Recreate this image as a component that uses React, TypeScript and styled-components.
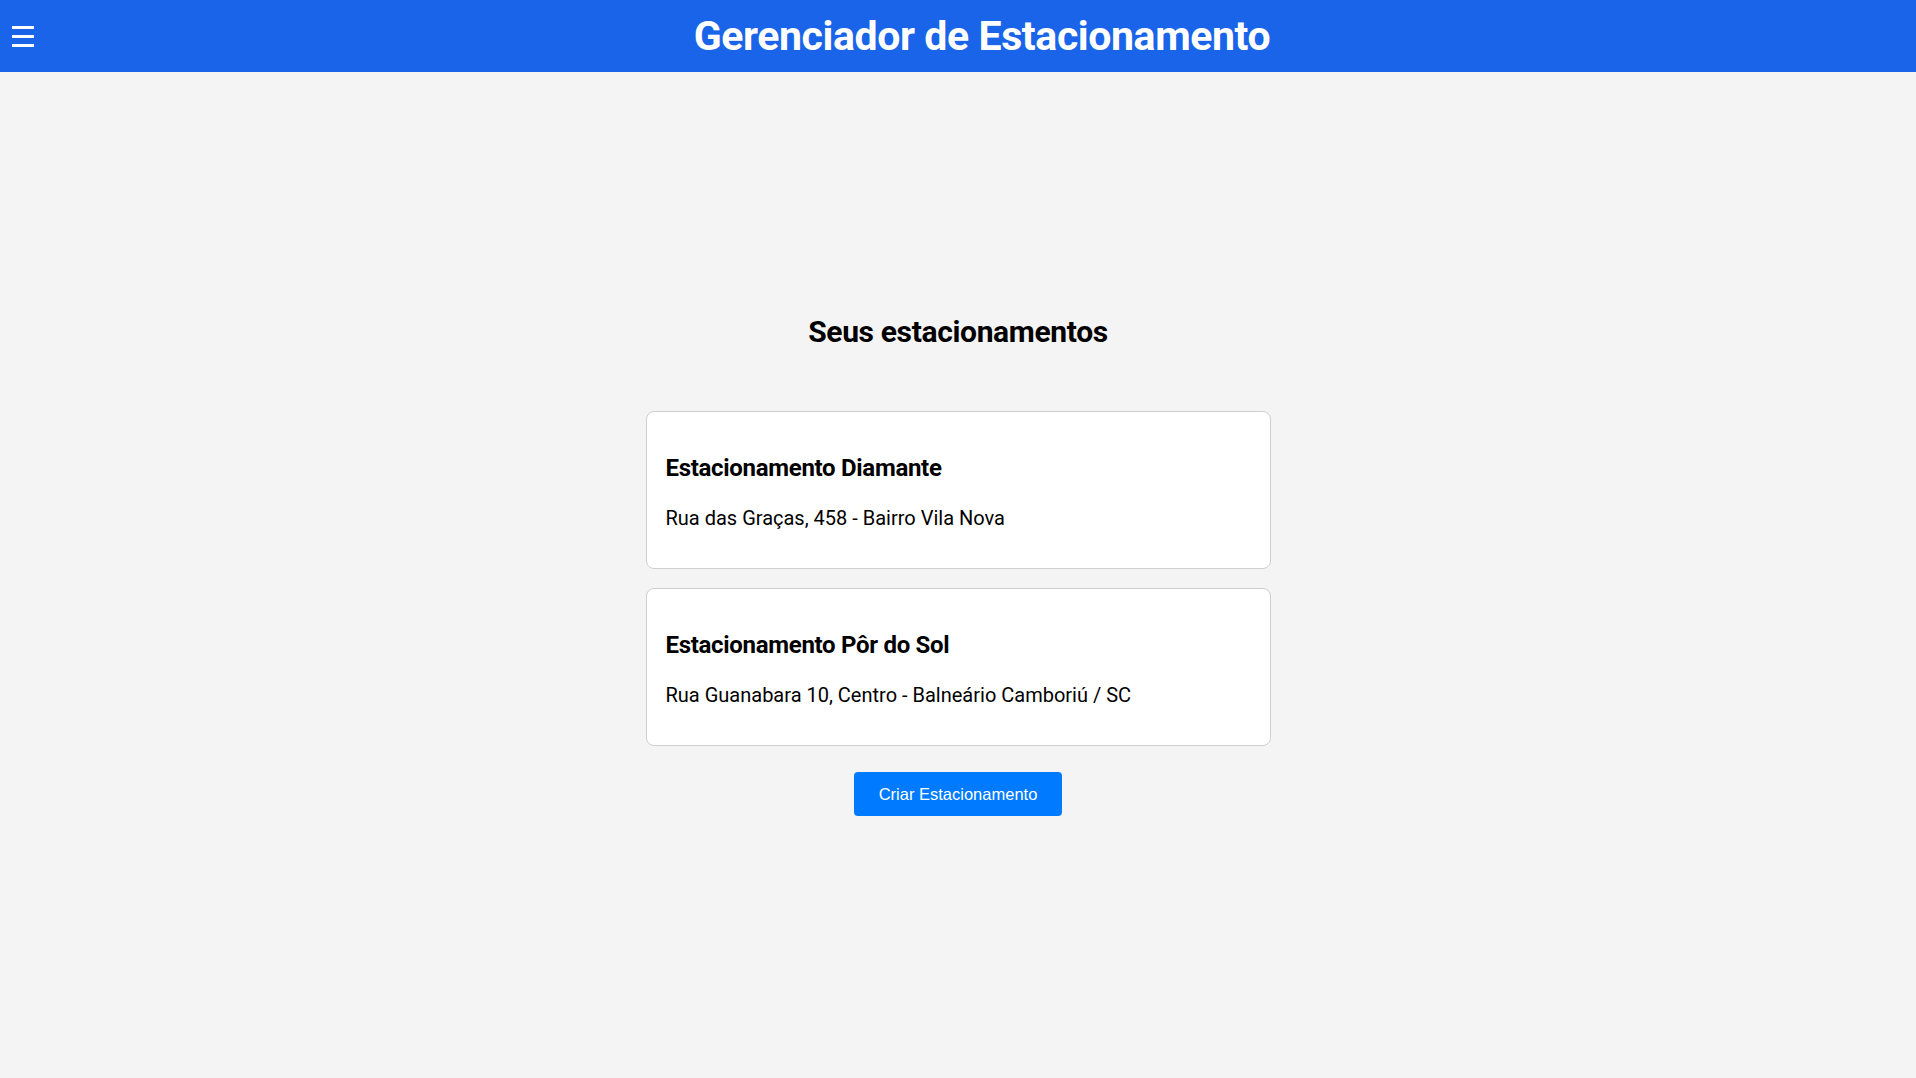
import React from "react";
import styled, { createGlobalStyle } from "styled-components";

const GlobalStyle = createGlobalStyle`
  html, body {
    margin: 0;
    padding: 0;
    background: #f4f4f4;
    font-family: Roboto, "Noto Sans", Arial, sans-serif;
    color: #000;
  }
  * { box-sizing: border-box; }
`;

const Header = styled.header`
  height: 72px;
  background: #1a64e9;
  display: flex;
  align-items: center;
`;

const MenuButton = styled.button`
  width: 48px;
  height: 72px;
  padding: 0 0 0 12px;
  border: none;
  background: transparent;
  display: flex;
  flex-direction: column;
  justify-content: center;
  gap: 6px;
  cursor: pointer;
`;

const MenuLine = styled.span`
  display: block;
  width: 22px;
  height: 3px;
  background: #fff;
`;

const AppTitle = styled.h1`
  flex: 1;
  margin: 0;
  text-align: center;
  color: #fff;
  font-family: Roboto, Arial, sans-serif;
  font-weight: 700;
  font-size: 41px;
  letter-spacing: -0.4px;
`;

const Main = styled.main`
  min-height: calc(100vh - 72px);
  display: flex;
  flex-direction: column;
  align-items: center;
  padding-top: 242px;
`;

const PageTitle = styled.h2`
  margin: 0 0 62px;
  font-size: 30px;
  line-height: 35px;
  font-weight: 700;
  letter-spacing: -0.35px;
`;

const List = styled.div`
  display: flex;
  flex-direction: column;
  gap: 19px;
  width: 625px;
`;

const Card = styled.div`
  background: #fff;
  border: 1px solid #cfcfcf;
  border-radius: 8px;
  padding: 20px 19px;
`;

const CardTitle = styled.h3`
  margin: 22px 0 0;
  font-size: 24px;
  line-height: 28px;
  font-weight: 700;
  letter-spacing: -0.3px;
`;

const CardAddress = styled.p`
  margin: 25px 0 18px;
  font-size: 20px;
  line-height: 23px;
  font-weight: 400;
`;

const CreateButton = styled.button`
  margin-top: 26px;
  height: 44px;
  padding: 0 25px;
  background: #007bff;
  color: #fff;
  border: none;
  border-radius: 4px;
  font-family: "Liberation Sans", Arial, sans-serif;
  font-size: 16.5px;
  cursor: pointer;
`;

const lots = [
  { name: "Estacionamento Diamante", address: "Rua das Graças, 458 - Bairro Vila Nova" },
  { name: "Estacionamento Pôr do Sol", address: "Rua Guanabara 10, Centro - Balneário Camboriú / SC" },
];

export default function App() {
  return (
    <>
      <GlobalStyle />
      <Header>
        <MenuButton aria-label="menu">
          <MenuLine />
          <MenuLine />
          <MenuLine />
        </MenuButton>
        <AppTitle>Gerenciador de Estacionamento</AppTitle>
      </Header>
      <Main>
        <PageTitle>Seus estacionamentos</PageTitle>
        <List>
          {lots.map((l) => (
            <Card key={l.name}>
              <CardTitle>{l.name}</CardTitle>
              <CardAddress>{l.address}</CardAddress>
            </Card>
          ))}
        </List>
        <CreateButton>Criar Estacionamento</CreateButton>
      </Main>
    </>
  );
}
